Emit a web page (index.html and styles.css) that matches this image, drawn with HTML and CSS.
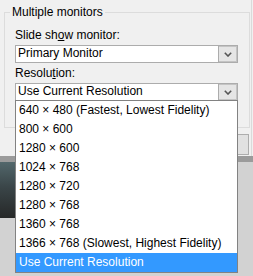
FILE: index.html
```html
<!DOCTYPE html>
<html lang="en">
<head>
  <meta charset="UTF-8">
  <title>Set Up Show</title>
  <link rel="stylesheet" href="styles.css">
</head>
<body>
  <div class="dialog">
    <fieldset class="group">
      <legend>Multiple monitors</legend>
      <label class="field-label">Slide sh<u>o</u>w monitor:</label>
      <div class="combo">
        <span class="combo-value">Primary Monitor</span>
        <span class="combo-btn"><svg width="8" height="5" viewBox="0 0 8 5"><path d="M0.8 0.8 L4 4 L7.2 0.8" fill="none" stroke="#555" stroke-width="1.6"/></svg></span>
      </div>
      <label class="field-label second">Resolu<u>t</u>ion:</label>
      <div class="combo">
        <span class="combo-value">Use Current Resolution</span>
        <span class="combo-btn"><svg width="8" height="5" viewBox="0 0 8 5"><path d="M0.8 0.8 L4 4 L7.2 0.8" fill="none" stroke="#555" stroke-width="1.6"/></svg></span>
      </div>
    </fieldset>
    <div class="actions">
      <button class="btn"></button>
      <button class="btn"></button>
    </div>
  </div>

  <div class="app">
    <div class="app-band"></div>
    <div class="app-body">
      <div class="thumb"></div>
    </div>
  </div>

  <ul class="dropdown">
    <li>640 × 480 (Fastest, Lowest Fidelity)</li>
    <li>800 × 600</li>
    <li>1280 × 600</li>
    <li>1024 × 768</li>
    <li>1280 × 720</li>
    <li>1280 × 768</li>
    <li>1360 × 768</li>
    <li>1366 × 768 (Slowest, Highest Fidelity)</li>
    <li class="selected">Use Current Resolution</li>
  </ul>
</body>
</html>
```

FILE: styles.css
```css
body {
  margin: 0;
  width: 253px;
  height: 276px;
  overflow: hidden;
  background: #f0f0f0;
  font-family: "Liberation Sans", Arial, sans-serif;
  font-size: 12px;
  line-height: 15px;
  color: #000;
}

.dialog {
  width: 251px;
  height: 156px;
  border-right: 1px solid #dadada;
  background: #f0f0f0;
  overflow: hidden;
}

.group {
  box-sizing: border-box;
  width: 246px;
  margin: 5px 0 0 4px;
  padding: 8px 11px 26px 10px;
  border: 1px solid #dcdcdc;
  min-width: 0;
}
.group legend {
  padding: 0 2px;
  margin-left: -5px;
  line-height: 15px;
}

.field-label { display: block; margin-bottom: 2px; }
.field-label.second { margin-top: 3px; }

.combo {
  box-sizing: border-box;
  height: 18px;
  display: flex;
  background: #fff;
  border: 1px solid #acacac;
}
.combo-value {
  flex: 1;
  padding: 0 0 1px 2px;
  line-height: 15px;
}
.combo-btn {
  width: 18px;
  display: flex;
  align-items: center;
  justify-content: center;
  background: #e5e5e5;
  border-left: 1px solid #acacac;
  box-shadow: inset -1px 0 #c4c4c4, inset 0 1px #c4c4c4, inset 0 -1px #c4c4c4;
}

.actions {
  display: flex;
  justify-content: flex-end;
  gap: 8px;
  margin-top: 6px;
  padding-right: 2px;
}
.btn {
  width: 75px;
  height: 21px;
  border: 1px solid #adadad;
  background: #e1e1e1;
  font: inherit;
}

.app-band { height: 6px; background: #9b9b9b; }
.app-body { height: 114px; background: #d2d2d2; }
.thumb {
  width: 120px;
  height: 56px;
  background: linear-gradient(#52676b, #3a4548 45%, #262828);
}

.dropdown {
  position: absolute;
  left: 15px;
  top: 100px;
  width: 221px;
  margin: 0;
  padding: 0;
  list-style: none;
  background: #fff;
  border: 1px solid #828282;
}
.dropdown li {
  height: 19px;
  line-height: 19px;
  padding-left: 3px;
  color: #000;
}
.dropdown li.selected { background: #3399ff; color: #fff; }
```
